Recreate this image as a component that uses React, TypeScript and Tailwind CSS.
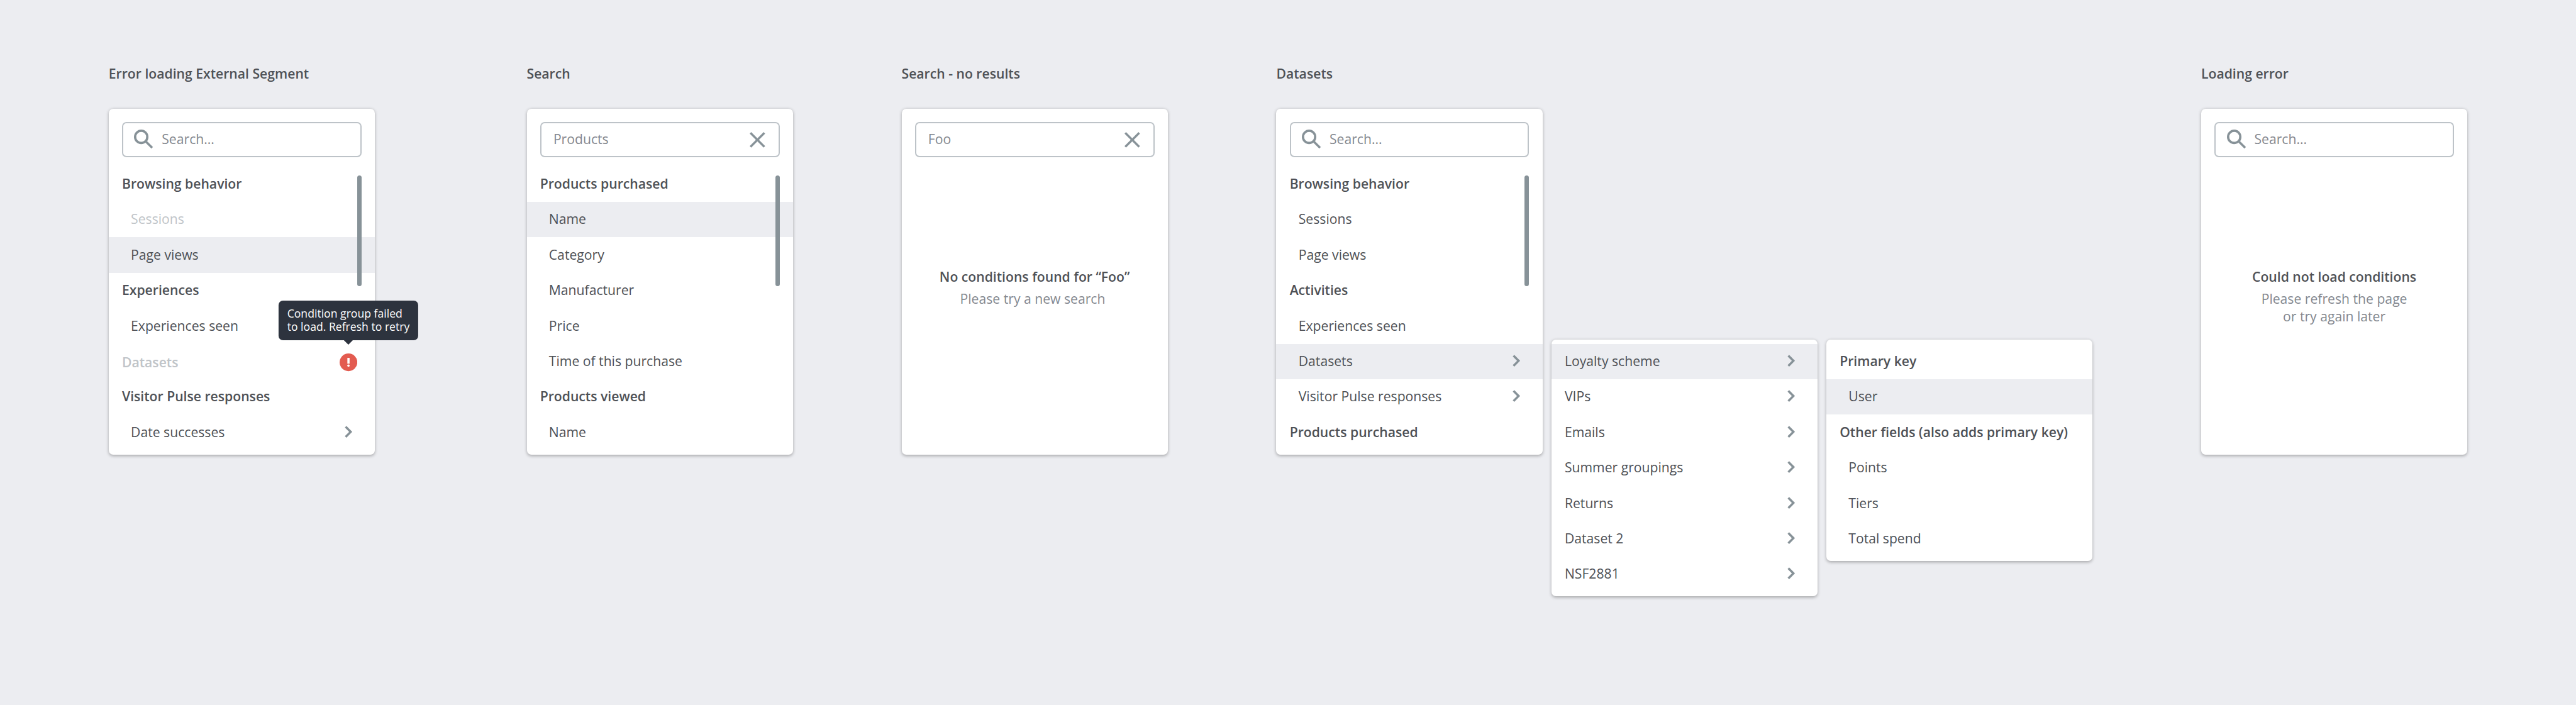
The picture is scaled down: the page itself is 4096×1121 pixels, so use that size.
import type { ReactNode } from "react";

type Item = {
  label: string;
  kind?: "group" | "child" | "flat";
  active?: boolean;
  disabled?: boolean;
  arrow?: boolean;
  error?: string[];
};

function SearchIcon() {
  return (
    <svg className="h-[31.74px] w-[31.74px] shrink-0" viewBox="0 0 36 36" fill="none" stroke="#879298">
      <circle cx="13.1" cy="13.2" r="11" strokeWidth="4.2" />
      <path d="M22 22 32.9 33" strokeWidth="4" />
    </svg>
  );
}

function CloseIcon() {
  return (
    <svg className="h-[24.69px] w-[24.69px] shrink-0" viewBox="0 0 28 28" fill="none" stroke="#879298" strokeWidth="3.8">
      <path d="M1.4 1.4 26.6 26.6M26.6 1.4 1.4 26.6" />
    </svg>
  );
}

function Chevron() {
  return (
    <svg className="mb-[2.2px] h-[19.4px] w-[12.34px] shrink-0" viewBox="0 0 14 22" fill="none" stroke="#879298" strokeWidth="4">
      <path d="M1.8 1.8 11 11 1.8 20.2" />
    </svg>
  );
}

function ErrorBadge({ lines }: { lines: string[] }) {
  return (
    <span className="relative flex shrink-0">
      <svg className="h-[28.21px] w-[28.21px]" viewBox="0 0 32 32">
        <circle cx="16" cy="16" r="16" fill="#e35b50" />
        <rect x="14" y="8" width="4" height="10.5" fill="#fff" />
        <circle cx="16" cy="21.9" r="2.1" fill="#fff" />
      </svg>
      <span className="absolute bottom-[49.37px] left-1/2 flex h-[63.48px] w-[222.17px] -translate-x-1/2 flex-col justify-center rounded-[7px] bg-[#2d333e] pl-[14.1px] text-[17.63px] leading-[21.16px] font-normal text-white">
        {lines.map((line) => (
          <span key={line} className="whitespace-nowrap">{line}</span>
        ))}
        <svg className="absolute top-full left-1/2 h-[7.05px] w-[14.1px] -translate-x-1/2" viewBox="0 0 16 8">
          <path d="M0 0H16L8 8Z" fill="#2d333e" />
        </svg>
      </span>
    </span>
  );
}

function Row({ item }: { item: Item }) {
  const kind = item.kind ?? "child";
  return (
    <li
      className={[
        "flex h-[56.42px] items-center justify-between",
        kind === "child" ? "pl-[35.27px]" : "pl-[21.16px]",
        kind === "group" ? "font-semibold" : "font-normal",
        item.error ? "pt-[3.5px] pr-[28.21px]" : "pr-[35.62px]",
        item.active ? "bg-[#ecedf1]" : "",
        item.disabled ? "text-[#c0c4c8]" : "text-[#4e5156]",
      ].join(" ")}
    >
      <span className="pb-[0.8px] whitespace-nowrap">{item.label}</span>
      {item.arrow && <Chevron />}
      {item.error && <ErrorBadge lines={item.error} />}
    </li>
  );
}

function Rows({ items }: { items: Item[] }) {
  return (
    <ul className="flex flex-col">
      {items.map((item, i) => (
        <Row key={i} item={item} />
      ))}
    </ul>
  );
}

function SearchField({ value }: { value?: string }) {
  return (
    <div className="mx-[21.16px] flex h-[56.42px] items-center justify-between rounded-[7px] border-2 border-[#bdc3c8] pr-[20.9px] pl-[17.4px] text-[#84888f]">
      {value ? (
        <>
          <span className="pb-[0.8px] pl-[1.8px]">{value}</span>
          <CloseIcon />
        </>
      ) : (
        <span className="flex items-center gap-[12.2px]">
          <SearchIcon />
          <span className="pb-[0.8px]">Search...</span>
        </span>
      )}
    </div>
  );
}

function Card({ children }: { children: ReactNode }) {
  return (
    <div className="w-[423.18px] shrink-0 rounded-[7px] bg-white py-[7.05px] shadow-[0_1.8px_5.3px_rgba(0,0,0,0.3)]">
      {children}
    </div>
  );
}

function Picker({ value, items, scrollbar, children }: { value?: string; items?: Item[]; scrollbar?: boolean; children?: ReactNode }) {
  return (
    <Card>
      <div className="relative flex h-[536.02px] flex-col gap-[14.11px] pt-[14.11px]">
        <SearchField value={value} />
        {items && <Rows items={items} />}
        {children}
        {scrollbar && <span className="absolute top-[98.75px] right-[21.16px] h-[176.3px] w-[7.05px] rounded-full bg-[#879298]" />}
      </div>
    </Card>
  );
}

function Message({ title, children }: { title: string; children: ReactNode }) {
  return (
    <div className="flex flex-col items-center pt-[159.3px] text-center">
      <p className="leading-[32px] font-semibold text-[#4e5156]">{title}</p>
      <div className="mt-[5.4px] leading-[28.21px] text-[#84888f]">{children}</div>
    </div>
  );
}

function Section({ title, children }: { title: string; children: ReactNode }) {
  return (
    <section className="flex shrink-0 flex-col">
      <h2 className="h-[70px] text-[21.16px] leading-[28.8px] font-semibold text-[#4e5156]">{title}</h2>
      <div className="flex items-start gap-[14.11px]">{children}</div>
    </section>
  );
}

const externalSegment: Item[] = [
  { label: "Browsing behavior", kind: "group" },
  { label: "Sessions", disabled: true },
  { label: "Page views", active: true },
  { label: "Experiences", kind: "group" },
  { label: "Experiences seen" },
  { label: "Datasets", kind: "group", disabled: true, error: ["Condition group failed", "to load. Refresh to retry"] },
  { label: "Visitor Pulse responses", kind: "group" },
  { label: "Date successes", arrow: true },
];

const products: Item[] = [
  { label: "Products purchased", kind: "group" },
  { label: "Name", active: true },
  { label: "Category" },
  { label: "Manufacturer" },
  { label: "Price" },
  { label: "Time of this purchase" },
  { label: "Products viewed", kind: "group" },
  { label: "Name" },
];

const conditions: Item[] = [
  { label: "Browsing behavior", kind: "group" },
  { label: "Sessions" },
  { label: "Page views" },
  { label: "Activities", kind: "group" },
  { label: "Experiences seen" },
  { label: "Datasets", active: true, arrow: true },
  { label: "Visitor Pulse responses", arrow: true },
  { label: "Products purchased", kind: "group" },
];

const datasets: Item[] = [
  { label: "Loyalty scheme", kind: "flat", arrow: true, active: true },
  { label: "VIPs", kind: "flat", arrow: true },
  { label: "Emails", kind: "flat", arrow: true },
  { label: "Summer groupings", kind: "flat", arrow: true },
  { label: "Returns", kind: "flat", arrow: true },
  { label: "Dataset 2", kind: "flat", arrow: true },
  { label: "NSF2881", kind: "flat", arrow: true },
];

const fields: Item[] = [
  { label: "Primary key", kind: "group" },
  { label: "User", active: true },
  { label: "Other fields (also adds primary key)", kind: "group" },
  { label: "Points" },
  { label: "Tiers" },
  { label: "Total spend" },
];

export default function App() {
  return (
    <main className="flex h-[1121px] w-[4096px] items-start gap-[172.8px] overflow-hidden bg-[#ecedf1] pt-[102.8px] pl-[172.8px] font-['Open_Sans',sans-serif] text-[21.16px] leading-[28.8px]">
      <div className="mr-[68.77px] flex">
        <Section title="Error loading External Segment">
          <Picker items={externalSegment} scrollbar />
        </Section>
      </div>
      <Section title="Search">
        <Picker value="Products" items={products} scrollbar />
      </Section>
      <Section title="Search - no results">
        <Picker value="Foo">
          <Message title="No conditions found for “Foo”">
            <p className="pr-[6.2px]">Please try a new search</p>
          </Message>
        </Picker>
      </Section>
      <Section title="Datasets">
        <Picker items={conditions} scrollbar />
        <div className="flex items-start gap-[14.11px] pt-[366.75px]">
          <Card>
            <Rows items={datasets} />
          </Card>
          <Card>
            <Rows items={fields} />
          </Card>
        </div>
      </Section>
      <Section title="Loading error">
        <Picker>
          <Message title="Could not load conditions">
            <p>Please refresh the page</p>
            <p>or try again later</p>
          </Message>
        </Picker>
      </Section>
    </main>
  );
}
